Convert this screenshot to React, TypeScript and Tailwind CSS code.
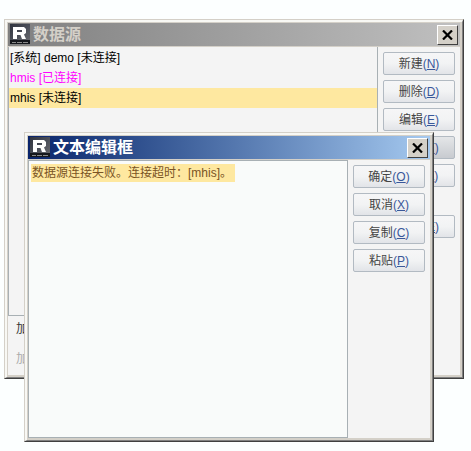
import type { ReactNode } from 'react'

const FONT = "font-['Liberation_Sans','Noto_Sans_CJK_SC',sans-serif]"

function Logo() {
  return (
    <div className="relative w-5 h-5 mt-[1px] self-start shrink-0 bg-gradient-to-br from-[#30343e] via-[#4a4e58] to-[#6e6e72]">
      <svg width="20" height="16" viewBox="0 0 20 16" className="block">
        <path d="M3 3h11l2 2v4l-2 1.500 2 4.500h-4l-1.500-4H7v4H3zM7 6v2h5V6z" fill="#fff" fillRule="evenodd" />
      </svg>
      <div className="absolute bottom-0 left-0 right-0 h-[4px] bg-[#15171c] flex items-center justify-center gap-[1px]">
        <span className="w-[4px] h-[1px] bg-[#8a8a8a]" />
        <span className="w-[5px] h-[1px] bg-[#8a8a8a]" />
        <span className="w-[5px] h-[1px] bg-[#8a8a8a]" />
      </div>
    </div>
  )
}

function CloseBtn() {
  return (
    <div className="w-[21px] h-[20px] bg-[#d4d0c8] border border-t-white border-l-white border-r-[#404040] border-b-[#404040] flex items-center justify-center shrink-0">
      <svg width="11" height="10" viewBox="0 0 11 10">
        <path d="M1 0.500L10 9.500M10 0.500L1 9.500" stroke="#000" strokeWidth="2.200" />
      </svg>
    </div>
  )
}

function Btn({ label, k, hover }: { label: string; k: string; hover?: boolean }) {
  return (
    <div
      className={`w-[72px] h-[23px] shrink-0 rounded-[2px] border border-[#b2bac2] flex items-center justify-center text-[12px] text-[#444] ${
        hover
          ? 'bg-gradient-to-b from-[#e4e6e8] to-[#c8cbd0]'
          : 'bg-gradient-to-b from-[#f6f6f7] via-[#f2f3f4] to-[#e2e4e8]'
      }`}
    >
      {label}
      <span className="text-[#39579a]">
        (<span className="underline">{k}</span>)
      </span>
    </div>
  )
}

// classic raised window frame: 4px on every side
function Frame({ className, children }: { className: string; children: ReactNode }) {
  return (
    <div className={`absolute border border-t-[#d4d0c8] border-l-[#d4d0c8] border-r-[#404040] border-b-[#404040] ${className}`}>
      <div className="h-full border-t-2 border-l-2 border-r border-b border-t-[#f8f8f4] border-l-[#f8f8f4] border-r-[#808080] border-b-[#808080]">
        <div className="h-full flex flex-col bg-[#f4f4f4] border-t border-l border-r-2 border-b-2 border-[#d4d0c8]">
          {children}
        </div>
      </div>
    </div>
  )
}

export default function App() {
  return (
    <div className={`relative w-[471px] h-[451px] bg-[#fcffff] overflow-hidden ${FONT}`}>
      {/* back window */}
      <Frame className="left-[4px] top-[19px] w-[460px] h-[360px]">
        <div className="h-[24px] shrink-0 flex items-center pl-[2px] pr-[2px] border-b border-[#d4d0c8] bg-gradient-to-r from-[#808080] to-[#c0c0c0]">
          <Logo />
          <span className="ml-[3px] text-[16px] font-bold text-[#d4d0c8]">数据源</span>
          <div className="ml-auto">
            <CloseBtn />
          </div>
        </div>
        <div className="flex flex-1">
          <div className="flex flex-col">
            <div className="w-[370px] h-[269px] border-l border-r border-b border-[#a8b0b4] pt-[1px] text-[12px] text-black">
              <div className="h-[20px] pl-[1px] flex items-center">[系统] demo [未连接]</div>
              <div className="h-[20px] pl-[1px] flex items-center text-[#ff00ff]">hmis [已连接]</div>
              <div className="h-[20px] pl-[1px] flex items-center bg-[#fee8a0]">mhis [未连接]</div>
            </div>
            <div className="pl-[8px] pt-[6px] flex flex-col gap-[16px] text-[12px]">
              <span className="h-[14px] leading-[14px] text-[#333]">加</span>
              <span className="h-[14px] leading-[14px] text-[#aaa]">加</span>
            </div>
          </div>
          <div className="flex flex-col ml-[5px] pt-[5px]">
            <div className="flex flex-col gap-[5px]">
              <Btn label="新建" k="N" />
              <Btn label="删除" k="D" />
              <Btn label="编辑" k="E" />
              <Btn label="测试" k="T" hover />
              <Btn label="连接" k="L" />
            </div>
            <div className="mt-[28px]">
              <Btn label="关闭" k="E" />
            </div>
          </div>
        </div>
      </Frame>

      {/* text editor dialog */}
      <Frame className="left-[24px] top-[132px] w-[410px] h-[310px]">
        <div className="h-[24px] shrink-0 flex items-center pl-[2px] pr-[2px] border-b border-[#d4d0c8] bg-gradient-to-r from-[#0a246a] to-[#a6caf0]">
          <Logo />
          <span className="ml-[3px] text-[16px] font-bold text-white">文本编辑框</span>
          <div className="ml-auto">
            <CloseBtn />
          </div>
        </div>
        <div className="flex flex-1 min-h-0">
          <div className="w-[320px] border border-[#a8b0b4] bg-[#f9fbfa] pt-[3px] pl-[2px]">
            <div className="w-fit h-[18px] leading-[18px] pl-[1px] pr-[3px] text-[12px] text-[#7a5424] bg-[#fee8a0]">
              数据源连接失败。连接超时：[mhis]。
            </div>
          </div>
          <div className="flex flex-col gap-[5px] ml-[5px] pt-[5px]">
            <Btn label="确定" k="O" />
            <Btn label="取消" k="X" />
            <Btn label="复制" k="C" />
            <Btn label="粘贴" k="P" />
          </div>
        </div>
      </Frame>
    </div>
  )
}
